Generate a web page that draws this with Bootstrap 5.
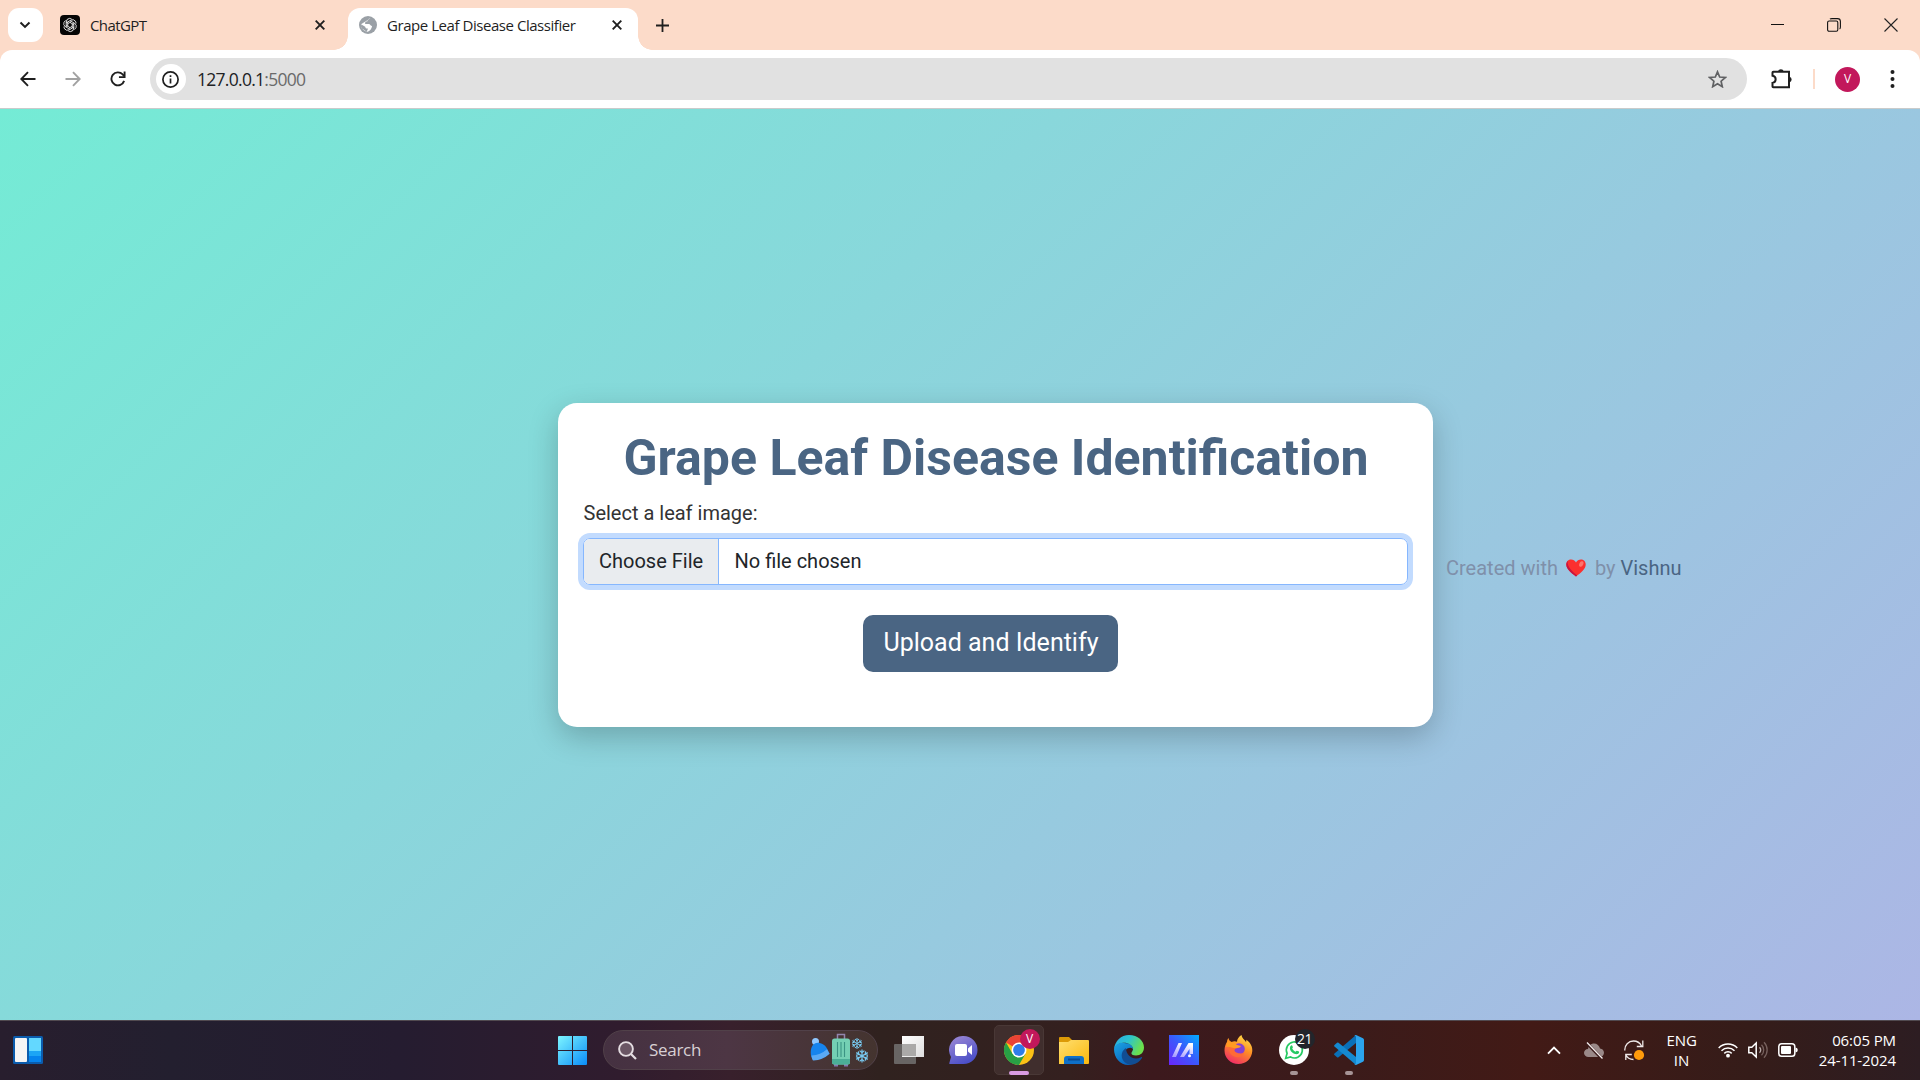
<!DOCTYPE html>
<html lang="en">
<head>
<meta charset="utf-8">
<meta name="viewport" content="width=device-width, initial-scale=1">
<title>Grape Leaf Disease Classifier</title>
<link href="https://cdn.jsdelivr.net/npm/bootstrap@5.3.0/dist/css/bootstrap.min.css" rel="stylesheet">
<style>
html{font-size:20px}
body{height:1080px;overflow:hidden;font-family:Roboto,sans-serif}
svg{display:block;flex:none}
.ui{font-family:"Open Sans","Noto Sans",sans-serif}
/* browser window */
.tabstrip{height:50px;background:#fcdbc9;font-size:15px;color:#1f1f1f}
.tab-menu{width:35px;height:34px;margin:0 17px 0 8px;border-radius:11px;background:#fff}
.tab-idle{width:288px;height:50px}
.tab-live{position:relative;width:290px;height:42px;margin-top:8px;background:#fff;border-radius:12px 12px 0 0}
.tab-live::before,.tab-live::after{content:"";position:absolute;bottom:0;width:14px;height:14px}
.tab-live::before{left:-14px;background:radial-gradient(circle at 0 0,transparent 13.5px,#fff 14px)}
.tab-live::after{right:-14px;background:radial-gradient(circle at 100% 0,transparent 13.5px,#fff 14px)}
.tab-text{letter-spacing:-.45px;white-space:nowrap;line-height:20px}
.toolbar-wrap{height:59px;background:#fcdbc9}
.toolbar{height:59px;background:#fff;border-radius:12px 12px 0 0;border-bottom:1px solid #c9cbcb}
.omnibox{width:1597px;height:42px;border-radius:21px;background:#e1e1e1;font-size:17.500px;color:#202124}
.site-info{width:30px;height:30px;border-radius:50%;background:#fff;margin-left:5.500px}
.url{letter-spacing:-.72px;margin:1px 0 0 11.500px}
.url span{color:#6a6a6a}
.avatar{width:25px;height:25px;border-radius:50%;background:#c2185b;color:#fff;font-size:12px}
/* page */
.page{height:911px;background:linear-gradient(135deg,#74ebd5,#acb6e5);padding-left:558px}
.panel{width:875px;height:324px;padding:25px;border-radius:19px;background:#fff;box-shadow:0 10px 30px rgba(0,0,0,.22)}
.panel h1{font-size:50px;color:#4a6583;line-height:60px;margin-bottom:10px;padding-left:1px}
.panel label{color:#333;padding-left:.5px}
.picker,.picker:focus{border:1px solid #86b7fe;box-shadow:0 0 0 5px #c2dbfe;border-radius:7px;overflow:hidden;height:47px}
.picker .choose{background:#e9ecef;border-right:1px solid #86b7fe;height:100%;padding:0 15px;width:135px}
.btn-go,.btn-go:hover{background:#4a6583;color:#fff;margin-right:10px;width:255px;height:57px;white-space:nowrap;padding:9px 0 10px 1px}
.credit{color:#7f90aa;margin:7px 0 0 13px;white-space:nowrap}
.credit b{color:#4a6583;font-weight:400}
/* taskbar */
.taskbar{height:60px;border-top:1px solid #514a50;padding-bottom:1px;color:#fff;font-size:15px;
background:linear-gradient(90deg,#281e2e 0,#231f2f 170px,#251c30 400px,#301c2e 620px,#38202c 730px,#30221f 880px,#34201f 1070px,#3c191d 1150px,#3b1b1a 1350px,#421a16 1530px,#351c19 1750px,#2d1d22 1920px)}
.widget-slot{width:558px;padding-left:13px}
.win-slot{width:45px}
.find{width:275px;height:40px;border-radius:20px;background:linear-gradient(90deg,#453141,#4d3644 45%,#44342f);border:1px solid #514149;padding:0 7px 0 14px;color:#d8d0d4;font-size:17px}
.slot{position:relative;width:55px;height:58px}
.slot.active-app::before{content:"";position:absolute;left:2px;top:4px;width:50px;height:50px;border-radius:5px;background:#402e2d;border:1px solid #493836}
.slot svg{position:relative}
.run-dot{position:absolute;left:23.5px;bottom:4px;width:8px;height:4px;border-radius:2px;background:#a69496}
.run-dot.wide{left:17.5px;width:20px;background:#d99be2}
.count{position:absolute;left:28px;top:8px;width:20px;height:20px;border-radius:50%;background:#22252b;color:#fff;font-size:14px;line-height:20px;text-align:center;letter-spacing:-.4px}
.count.person{background:#c2185b;font-size:12px}
.tray{padding-right:24px}
.tray-text{line-height:20px;letter-spacing:-.1px;white-space:nowrap;margin-top:-1px}
</style>
<script src="https://cdn.jsdelivr.net/npm/bootstrap@5.3.0/dist/js/bootstrap.bundle.min.js"></script>
</head>
<body class="d-flex flex-column">
<header class="ui">
  <div class="tabstrip d-flex align-items-center">
    <div class="tab-menu d-flex align-items-center justify-content-center">
      <svg width="12" height="8" viewBox="0 0 12 8" style="margin-right:1px"><path d="M1.500 1.500 6 5.900l4.500-4.400" fill="none" stroke="#1f1f1f" stroke-width="2"/></svg>
    </div>
    <div class="tab-idle d-flex align-items-center">
      <svg width="20" height="20" viewBox="0 0 20 20"><rect width="20" height="20" rx="4" fill="#050505"/><g fill="none" stroke="#fff" stroke-width=".8"><path id="knot" d="M7.800 8.700 11.500 6.500l3 1.700q2.700 1.800 1.500 4.600-.6 1.200-1.800 1.600M11.500 6.500 10 5.600"/><use href="#knot" transform="rotate(60 10 10)"/><use href="#knot" transform="rotate(120 10 10)"/><use href="#knot" transform="rotate(180 10 10)"/><use href="#knot" transform="rotate(240 10 10)"/><use href="#knot" transform="rotate(300 10 10)"/></g></svg>
      <span class="tab-text" style="margin-left:10px;letter-spacing:-.6px">ChatGPT</span>
      <svg class="ms-auto" style="margin-right:23px" width="10" height="10" viewBox="0 0 10 10"><path d="m.7.700 8.600 8.600m0-8.600L.7 9.300" stroke="#1f1f1f" stroke-width="1.900"/></svg>
    </div>
    <div class="tab-live d-flex align-items-center">
      <svg style="margin-left:11px;margin-top:-8px" width="18" height="18" viewBox="0 0 18 18"><circle cx="9" cy="9" r="9" fill="#9aa0a6"/><path d="M11.500 2.200C9 2.400 8.500 4 8.600 5.300 6.500 5.200 5.800 6.600 6.200 8h3.600c1.600 0 1.500 2 3.300 2-.3 2.500-1.900 4.900-4.300 5.800l-1.500-.2c.9-.7 1.500-1.700 1.500-3-1.900.1-2.300-.6-2.600-1.900L2 8.300c-.2 2.700 1.700 6.100 5.300 7.300L2.500 12 2 8.300z" fill="#fff"/></svg>
      <span class="tab-text" style="margin:-8px 0 0 10px">Grape Leaf Disease Classifier</span>
      <svg class="ms-auto" style="margin-right:16px;margin-top:-8px" width="10" height="10" viewBox="0 0 10 10"><path d="m.7.700 8.600 8.600m0-8.600L.7 9.300" stroke="#1f1f1f" stroke-width="1.900"/></svg>
    </div>
    <svg style="margin-left:18px" width="13" height="13" viewBox="0 0 13 13"><path d="M6.500 0v13M0 6.500h13" stroke="#1f1f1f" stroke-width="1.800"/></svg>
    <div class="ms-auto d-flex align-items-center" style="padding-right:22px">
      <svg width="13" height="13" viewBox="0 0 13 13"><path d="M0 5.500h13" stroke="#111" stroke-width="1"/></svg>
      <svg style="margin-left:42.500px" width="14" height="14" viewBox="0 0 14 14"><rect x=".6" y="3" width="10.200" height="10.200" rx="1.500" fill="none" stroke="#111" stroke-width="1.100"/><path d="M3 1.200Q3.500.6 5 .6h5.500Q13.400.6 13.400 3.500V9q0 1.500-.8 2" fill="none" stroke="#111" stroke-width="1.100"/></svg>
      <svg style="margin-left:43.500px" width="14" height="14" viewBox="0 0 14 14"><path d="m.5.500 13 13m0-13-13 13" stroke="#222" stroke-width="1.100"/></svg>
    </div>
  </div>
  <div class="toolbar-wrap">
    <div class="toolbar d-flex align-items-center">
      <svg style="margin-left:19.500px" width="16" height="16" viewBox="0 0 16 16"><path d="M15.500 8H1.500M8 1.200 1.300 8 8 14.800" fill="none" stroke="#1f1f1f" stroke-width="1.900"/></svg>
      <svg style="margin-left:29px" width="16" height="16" viewBox="0 0 16 16"><path d="M.5 8h14M8 1.200 14.700 8 8 14.800" fill="none" stroke="#a2a2a2" stroke-width="1.900"/></svg>
      <svg style="margin-left:29px" width="16" height="16" viewBox="0 0 17 17"><path d="M15 10.500A6.900 6.900 0 1 1 13.500 3.700L15 5.500" fill="none" stroke="#1f1f1f" stroke-width="2"/><path d="M15.500.500v6H9.500" fill="none" stroke="#1f1f1f" stroke-width="2"/></svg>
      <div class="omnibox d-flex align-items-center" style="margin-left:24.500px">
        <div class="site-info d-flex align-items-center justify-content-center"><svg width="17" height="17" viewBox="0 0 17 17"><circle cx="8.500" cy="8.500" r="7.600" fill="none" stroke="#1f1f1f" stroke-width="1.700"/><path d="M8.500 7.500v5M8.500 4.300v1.800" stroke="#1f1f1f" stroke-width="1.700"/></svg></div>
        <div class="url">127.0.0.1<span>:5000</span></div>
        <svg class="ms-auto" style="margin-right:20px" width="19" height="18" viewBox="0 0 19 18"><path d="m9.500 1.800 2.200 5.200 5.600.5-4.200 3.700 1.200 5.500-4.800-2.900-4.800 2.900 1.200-5.500L1.700 7.500 7.300 7z" fill="none" stroke="#606163" stroke-width="1.700"/></svg>
      </div>
      <svg style="margin-left:24px;margin-top:-2px" width="22" height="21" viewBox="0 0 22 21"><path d="M2.800 3.800H18v15.400H2.300q-.8 0-.8-.8v-3.500c4.200-.6 4.200-6.600 0-7.200V4.600q0-.8.800-.8z" fill="none" stroke="#1f1f1f" stroke-width="2"/><path d="M7 3.500a3 3 0 0 1 5.800 0zM18.500 8.800a2.900 2.900 0 0 1 0 5.600z" fill="#1f1f1f"/></svg>
      <svg style="margin-left:20px" width="2" height="20"><rect width="2" height="20" fill="#fcdbc9"/></svg>
      <div class="avatar d-flex align-items-center justify-content-center" style="margin-left:20px">V</div>
      <svg style="margin-left:30px" width="5" height="18" viewBox="0 0 5 18" fill="#1f1f1f"><circle cx="2.500" cy="2" r="2"/><circle cx="2.500" cy="9" r="2"/><circle cx="2.500" cy="16" r="2"/></svg>
    </div>
  </div>
</header>

<main class="page d-flex align-items-center">
  <section class="panel">
    <h1 class="fw-bold text-center">Grape Leaf Disease Identification</h1>
    <label class="form-label d-block mb-2">Select a leaf image:</label>
    <div class="picker d-flex align-items-center mb-4">
      <span class="choose d-flex align-items-center text-nowrap">Choose File</span>
      <span style="margin-left:15.500px">No file chosen</span>
    </div>
    <div class="text-center"><button type="button" class="btn btn-lg btn-go border-0">Upload and Identify</button></div>
  </section>
  <footer class="credit d-flex align-items-center">
    <span>Created with</span>
    <svg style="margin:0 8.500px" width="20" height="18" viewBox="0 0 20 18"><path d="M10 17.500C5 13.500.3 10 .3 5.400.3 2.500 2.500.5 5.100.5 7.200.5 9 1.600 10 3.500 11 1.600 12.800.5 14.900.5c2.600 0 4.800 2 4.800 4.900 0 4.600-4.700 8.100-9.700 12.100z" fill="#fb302f"/><path d="M10 17.500C5 13.500.3 10 .3 5.400.3 4 1 2.500 1.700 1.900 1 8 6.500 12.500 11.200 16.500z" fill="#c8143f"/><ellipse cx="15.300" cy="5" rx="2" ry="2.900" transform="rotate(25 15.300 5)" fill="#ff746c"/></svg>
    <span>by <b>Vishnu</b></span>
  </footer>
</main>

<nav class="taskbar ui d-flex align-items-center">
  <div class="widget-slot">
    <svg width="30" height="28" viewBox="0 0 30 28"><rect width="30" height="28" rx="1.500" fill="#0b5cad"/><rect x="2" y="2" width="12" height="24" rx="1" fill="#f5f5f5"/><path d="M16 2h12v13H16z" fill="#63d8ff"/><path d="M16 15h12v5H16z" fill="#1ca5f5"/><path d="M16 20h12v6H16z" fill="#0684ed"/></svg>
  </div>
  <div class="win-slot">
    <svg width="29" height="29" viewBox="0 0 29 29"><defs><linearGradient id="win" gradientUnits="userSpaceOnUse" x2="29" y2="29"><stop stop-color="#7df5ff"/><stop offset="1" stop-color="#0a8cf8"/></linearGradient></defs><path d="M0 1q0-1 1-1h13v14H0zM15 0h13q1 0 1 1v13H15zM0 15h14v14H1q-1 0-1-1zM15 15h14v13q0 1-1 1H15z" fill="url(#win)"/></svg>
  </div>
  <div class="find d-flex align-items-center">
    <svg width="19" height="19" viewBox="0 0 19 19"><circle cx="8" cy="8" r="6.900" fill="#6a5664" stroke="#e4dde1" stroke-width="1.900"/><path d="m13 13 5 5" stroke="#e4dde1" stroke-width="2.200"/></svg>
    <span style="margin-left:12px;letter-spacing:-.3px">Search</span>
    <svg class="ms-auto" width="60" height="34" viewBox="811 1033 60 34"><circle cx="816.500" cy="1041.500" r="3.500" fill="#8fc8ff"/><path d="M812.500 1057.500c-1.500-5-.8-11 2.500-13.500 5-3.500 12.500.5 14.500 8z" fill="#1684ee"/><path d="M812.500 1055.500q9-.5 15.500-6.300l2.700 4.500q-7 6.300-16.200 6.800-1.500 0-2-5z" fill="#5aa9f5"/><path d="M838.500 1039v-4.500h7v4.500" fill="none" stroke="#9285ad" stroke-width="1.500"/><path d="M835 1064h4v2.500h-4zM845 1064h4v2.500h-4z" fill="#8575ae"/><rect x="833" y="1038.500" width="18" height="26" rx="2.500" fill="#74d0b4"/><path d="M833 1059h18v3.500q0 2-2 2h-14q-2 0-2-2z" fill="#4bae97"/><path d="M838.500 1042v15M842 1042v15M845.500 1042v15" stroke="#3b9484" stroke-width="1.100"/><g stroke="#78c9f0" stroke-width="1" fill="none"><g id="flake"><path d="M858 1038v11M853.200 1040.700l9.600 5.600M853.200 1046.300l9.600-5.600M856 1039l2 1.700 2-1.700M856 1048l2-1.700 2 1.700M853 1043l2.300-.8-.3-2.500M863 1044l-2.300.8.300 2.500M863 1043l-2.300-.8.300-2.500M853 1044l2.300.8-.3 2.500"/></g><use href="#flake" transform="translate(-166.600 -196.200) scale(1.200)"/></g></svg>
  </div>
  <div class="d-flex" style="margin-left:3.500px">
    <div class="slot d-flex align-items-center justify-content-center">
      <svg width="30" height="28" viewBox="0 0 30 28"><defs><linearGradient id="tv" x2="1" y2="1"><stop stop-color="#fff"/><stop offset="1" stop-color="#dedede"/></linearGradient></defs><rect y="8" width="22" height="20" rx="1" fill="#686564"/><path d="M8 0h22v21H8z" fill="url(#tv)"/><path d="M8 8h14v12H8z" fill="#aaa9a8"/></svg>
    </div>
    <div class="slot d-flex align-items-center justify-content-center">
      <svg style="margin-right:1px" width="29" height="28" viewBox="0 0 29 28"><defs><linearGradient id="chat" x2=".5" y2="1"><stop stop-color="#a08bd5"/><stop offset="1" stop-color="#4c50c8"/></linearGradient></defs><path d="M14.500 0A14 14 0 1 1 14.500 28H1q-1 0-.6-1.200L2 21A14 14 0 0 1 14.500 0z" fill="url(#chat)"/><rect x="6" y="8" width="12" height="12" rx="2" fill="#fff"/><path d="m19 12.500 4-3.500v10l-4-3.500z" fill="#fff"/></svg>
    </div>
    <div class="slot active-app d-flex align-items-center justify-content-center">
      <svg width="30" height="30" viewBox="0 0 30 30"><circle cx="15" cy="15" r="15" fill="#fbc116"/><path d="M15 15 2 7.500A15 15 0 0 1 28 7.500H15z" fill="#ea4335"/><path d="M2 7.500A15 15 0 0 0 15 30l6.500-11.250L15 15 8.500 18.750z" fill="#28a045"/><circle cx="15" cy="15" r="7.500" fill="#fff"/><circle cx="15" cy="15" r="5.900" fill="#2f7de9"/></svg>
      <span class="count person">V</span><i class="run-dot wide"></i>
    </div>
    <div class="slot d-flex align-items-center justify-content-center">
      <svg width="30" height="27" viewBox="0 0 30 27"><defs><linearGradient id="fold" x2="1" y2="1"><stop stop-color="#ffdf70"/><stop offset="1" stop-color="#fbb80d"/></linearGradient></defs><path d="M0 1q0-1 1-1h9l3 3v5H0z" fill="#dc9a07"/><path d="M0 5h9l3-2h17q1 0 1 1v22q0 1-1 1H0z" fill="url(#fold)"/><path d="M5 27v-5q0-3 3-3h14q3 0 3 3v5z" fill="#0f70c8"/><path d="M9 21.500h12v2H9z" fill="#094a91"/></svg>
    </div>
    <div class="slot d-flex align-items-center justify-content-center">
      <svg width="30" height="30" viewBox="0 0 30 30"><defs><linearGradient id="eg" x2="1" y2=".4"><stop stop-color="#2aa9e6"/><stop offset=".5" stop-color="#2cc3cf"/><stop offset="1" stop-color="#6be04c"/></linearGradient><linearGradient id="eb" x2=".6" y2="1"><stop stop-color="#1ba5e3"/><stop offset="1" stop-color="#0a63be"/></linearGradient></defs><path d="M0 14C1 6 7 0 15 0c9 0 15 6 15 12.500 0 5-3.500 8-8 8-3.500 0-5-1.500-4.500-2.800 1-2 1.500-2.500 1.500-4C18 10 13 7 8 8c-4 .7-7 3-8 6z" fill="url(#eg)"/><path d="M0 14c1-5 6-7 10-6 6 0 9 3 9 6-3-3-9 0-9 6 0 4 3 8 8 9.500C8 32 0 24 0 14z" fill="url(#eb)"/><path d="M12 13c-8 5-4 17 6 16.700 5-.9 8-3.700 10-6.700.4-.8-.2-1.300-1-.8-7 3.500-15-1-15-9.200z" fill="#114d93"/></svg>
    </div>
    <div class="slot d-flex align-items-center justify-content-center">
      <svg width="30" height="30" viewBox="0 0 30 30"><defs><linearGradient id="ma" x2="1" y1="1" y2="0"><stop stop-color="#6b25fa"/><stop offset=".5" stop-color="#3b58fc"/><stop offset="1" stop-color="#00adff"/></linearGradient><linearGradient id="ms" x1=".7" x2=".2" y2="1"><stop stop-color="#fff"/><stop offset="1" stop-color="#a79dff"/></linearGradient></defs><path d="M0 0h30v30H0z" fill="url(#ma)"/><path d="m3 22 6.500-14H13L7 22zM11 22 19.500 8H24v11h-3.500v-5L15 22z" fill="url(#ms)"/><circle cx="20.500" cy="20.700" r="1.500" fill="#fff"/></svg>
    </div>
    <div class="slot d-flex align-items-center justify-content-center">
      <svg style="margin-right:1px" width="29" height="30" viewBox="0 0 29 30"><defs><linearGradient id="fx" x1=".8" x2=".3" y2="1"><stop stop-color="#ffe34b"/><stop offset=".45" stop-color="#ff8f24"/><stop offset="1" stop-color="#f02a68"/></linearGradient></defs><path d="M3 7c0-2 .7-3 1.500-4 .2 2 1.500 3 3 4 2-1 4-1 5.500-.3C13 4 15 1.500 17.500 0c.2 3 3 4.600 4.500 7 .4-.8.400-1.500.3-2.300C27 8 28.500 12 28.300 16 27.800 23.700 22 29 14.500 29 6.500 29 .5 23 .5 15.500.5 12 1.500 9 3 7z" fill="url(#fx)"/><circle cx="15" cy="14" r="5.800" fill="#8541d2"/><path d="M6 10c3-.5 6 0 9 1-1 2-4 2-4.500 4 0 3 6 4.500 10 2.500-2 5-8 6-12 3-4-2.800-4-7-2.500-10.500z" fill="#ff6a35"/><path d="M3 7c4-.7 7-.2 10 3l4 1c-1 2-3 2-5 2.200C8 13 5 11 2 12z" fill="#ff9b22"/></svg>
    </div>
    <div class="slot d-flex align-items-center justify-content-center">
      <svg width="30" height="30" viewBox="0 0 30 30"><circle cx="15" cy="15" r="15" fill="#fff"/><path d="m6.700 23.300 1.400-5A8 8 0 1 1 11.600 22z" fill="none" stroke="#26c963" stroke-width="1.700"/><path d="M11.500 11c1-1.200 1.700-.8 2 .2.600 1.300.4 1.600-.3 2.300.8 1.700 2 2.500 3.500 3.200.8-1.300 1.300-1.200 2.700-.4 1 .5.900.9.500 1.700-.9 1.500-2.900 1.400-4.600.700-2.700-1.200-5.600-4.200-3.800-7.700z" fill="#26c963"/></svg>
      <span class="count">21</span><i class="run-dot"></i>
    </div>
    <div class="slot d-flex align-items-center justify-content-center">
      <svg width="30" height="30" viewBox="0 0 30 30"><path d="M22 0v8L4.500 22.300q-.8.500-1.500 0L.5 20q-.8-.8 0-1.500z" fill="#0a70b8"/><path d="M22 30v-8L4.500 7.700Q3.700 7.200 3 7.700L.5 10q-.8.800 0 1.500z" fill="#1589d0"/><path d="m22 0 7 3.300q1 .5 1 1.700v20q0 1.200-1 1.700L22 30q-1 .3-1.800-.5Q22 30 22 28V2Q22 0 20.200.5 21-.3 22 0z" fill="#2ba4ed"/></svg>
      <i class="run-dot"></i>
    </div>
  </div>
  <div class="tray ms-auto d-flex align-items-center">
    <svg width="14" height="9" viewBox="0 0 14 9"><path d="m1 7.700 6-6 6 6" fill="none" stroke="#fff" stroke-width="1.900"/></svg>
    <svg style="margin-left:23px" width="20" height="17" viewBox="0 0 20 17"><path d="M4.500 15C2 15 0 13.200 0 11s1.700-4 4-4c.6-3.300 3-5.500 6-5.500s5.300 2 6 5c2.300.2 4 2 4 4.200S18.200 15 16 15z" fill="#9a8988"/><path d="m2.500.8 15 15.500" stroke="#3b1b1a" stroke-width="3"/><path d="m3 .500 15.500 16" stroke="#f5eeee" stroke-width="1.300"/></svg>
    <svg style="margin-left:20px" width="21" height="22" viewBox="0 0 21 22"><g fill="none" stroke="#eee8e8" stroke-width="1.300"><path d="M.8 11.500C.5 6 4.500 2 9.500 2c3.500 0 6.500 2 8 5M18.800 1.500v6h-6M9.500 20.500c-3.500 0-6.500-2-8-5M1.800 21v-5.500h6"/></g><circle cx="15" cy="16" r="5.100" fill="#ff9b0b"/></svg>
    <div class="tray-text text-center" style="margin-left:22px;width:30px">ENG<br>IN</div>
    <svg style="margin-left:21.500px" width="20" height="16" viewBox="0 0 20 16"><g fill="none" stroke="#fff" stroke-width="1.500"><path d="M.7 6A13 13 0 0 1 19.300 6M3.500 8.700a9.200 9.200 0 0 1 13 0M6.300 11.400a5.200 5.200 0 0 1 7.400 0"/></g><circle cx="10" cy="13.700" r="1.900" fill="#fff"/></svg>
    <svg style="margin-left:10px" width="20" height="18" viewBox="0 0 20 18"><path d="M.8 6.300h3L8.200 2v14l-4.400-4.300h-3z" fill="none" stroke="#fff" stroke-width="1.500"/><path d="M11.500 6.300a4 4 0 0 1 0 5.400" fill="none" stroke="#b5a7a5" stroke-width="1.300"/><path d="M13.500 3.700a7.500 7.500 0 0 1 0 10.600M16 1.300a11 11 0 0 1 0 15.400" fill="none" stroke="#76605d" stroke-width="1.300"/></svg>
    <svg style="margin-left:10px" width="20" height="14" viewBox="0 0 20 14"><rect x=".8" y=".8" width="16" height="12.400" rx="2.800" fill="none" stroke="#fff" stroke-width="1.500"/><rect x="3" y="3" width="10" height="8" rx="1" fill="#fff"/><path d="M17.500 4.500q2.300.3 2.300 2.500t-2.300 2.500z" fill="#fff"/></svg>
    <div class="tray-text text-end" style="margin-left:20px;width:78px">06:05 PM<br>24-11-2024</div>
  </div>
</nav>
</body>
</html>
